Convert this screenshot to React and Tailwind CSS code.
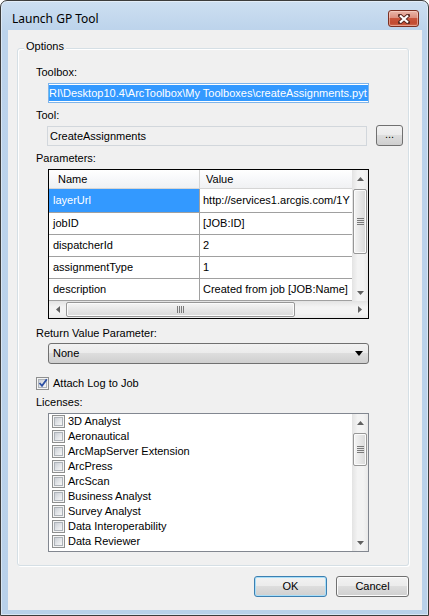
import React from "react";

function Arrow({ dir, color = "#4d4d4d" }) {
  if (dir === "up")
    return (
      <svg width="7" height="4" viewBox="0 0 7 4"><polygon points="0,4 3.5,0 7,4" fill={color} /></svg>
    );
  if (dir === "down")
    return (
      <svg width="7" height="4" viewBox="0 0 7 4"><polygon points="0,0 7,0 3.5,4" fill={color} /></svg>
    );
  if (dir === "left")
    return (
      <svg width="4" height="7" viewBox="0 0 4 7"><polygon points="4,0 4,7 0,3.5" fill={color} /></svg>
    );
  return (
    <svg width="4" height="7" viewBox="0 0 4 7"><polygon points="0,0 0,7 4,3.5" fill={color} /></svg>
  );
}

function VScroll({ thumbClass }) {
  return (
    <div className="w-[16px] h-full flex flex-col bg-[linear-gradient(to_right,#e3e3e3,#f3f3f3_35%,#f3f3f3_70%,#e9e9e9)]">
      <div className="h-[17px] shrink-0 flex items-center justify-center">
        <Arrow dir="up" color="#606060" />
      </div>
      <div
        className={`mx-[1px] shrink-0 rounded-[2px] border border-[#979797] bg-[linear-gradient(to_right,#f5f5f5,#e7e7e7_50%,#d9d9d9)] shadow-[inset_0_0_0_1px_#fbfbfb] flex flex-col items-center justify-center gap-[1px] ${thumbClass}`}
      >
        <div className="w-[7px] h-[1px] bg-[#7a7a7a]" />
        <div className="w-[7px] h-[1px] bg-[#7a7a7a]" />
        <div className="w-[7px] h-[1px] bg-[#7a7a7a]" />
        <div className="w-[7px] h-[1px] bg-[#7a7a7a]" />
      </div>
      <div className="flex-1" />
      <div className="h-[17px] shrink-0 flex items-center justify-center">
        <Arrow dir="down" color="#606060" />
      </div>
    </div>
  );
}

function HScroll() {
  return (
    <div className="h-[17px] w-full flex bg-[linear-gradient(to_bottom,#e3e3e3,#f3f3f3_35%,#f3f3f3_70%,#e9e9e9)]">
      <div className="w-[17px] shrink-0 flex items-center justify-center">
        <Arrow dir="left" color="#606060" />
      </div>
      <div className="w-[229px] my-[1px] shrink-0 rounded-[2px] border border-[#979797] bg-[linear-gradient(to_bottom,#f5f5f5,#e7e7e7_50%,#d9d9d9)] shadow-[inset_0_0_0_1px_#fbfbfb] flex items-center justify-center gap-[1px]">
        <div className="w-[1px] h-[7px] bg-[#7a7a7a]" />
        <div className="w-[1px] h-[7px] bg-[#7a7a7a]" />
        <div className="w-[1px] h-[7px] bg-[#7a7a7a]" />
        <div className="w-[1px] h-[7px] bg-[#7a7a7a]" />
      </div>
      <div className="flex-1" />
      <div className="w-[17px] shrink-0 flex items-center justify-center">
        <Arrow dir="right" color="#606060" />
      </div>
    </div>
  );
}

function CheckBox({ checked }) {
  return (
    <div className="w-[13px] h-[13px] shrink-0 border border-[#8e8f8f] bg-[#f4f4f4] p-[1px]">
      <div className="relative w-full h-full border border-[#aeb3b9] bg-[linear-gradient(135deg,#cbcfd5,#e6e8eb_60%,#f6f6f6)]">
        {checked && (
          <svg className="absolute -left-[1px] -top-[2px]" width="10" height="10" viewBox="0 0 10 10">
            <path d="M1.5 5 L4 7.8 L8.8 1.2" fill="none" stroke="#2c4fa3" strokeWidth="1.8" />
          </svg>
        )}
      </div>
    </div>
  );
}

const btn =
  "h-[21px] rounded-[3px] border bg-[linear-gradient(to_bottom,#f2f2f2,#ebebeb_50%,#dddddd_50%,#cfcfcf)] flex items-center";

const rows = [
  ["layerUrl", "http://services1.arcgis.com/1Y"],
  ["jobID", "[JOB:ID]"],
  ["dispatcherId", "2"],
  ["assignmentType", "1"],
  ["description", "Created from job [JOB:Name]"],
];

const licenses = [
  "3D Analyst",
  "Aeronautical",
  "ArcMapServer Extension",
  "ArcPress",
  "ArcScan",
  "Business Analyst",
  "Survey Analyst",
  "Data Interoperability",
  "Data Reviewer",
];

export default function App() {
  return (
    <div className="w-[429px] h-[616px] flex flex-col pl-[7px] pr-[6px] pb-[5px] border border-[#3c3c3c] rounded-t-[7px] bg-[linear-gradient(to_bottom,#cddff1,#bcd3eb_30px,#b9d1ea)] shadow-[inset_0_0_0_1px_rgba(255,255,255,0.45)] text-[11px] leading-[13px] text-black font-['Liberation_Sans',Arial,sans-serif]">
      {/* title bar */}
      <div className="h-[29px] shrink-0 flex items-start justify-between">
        <div className="pl-[4px] pt-[10px] text-[12px] leading-[16px] font-['Noto_Sans','Liberation_Sans',sans-serif]">
          Launch GP Tool
        </div>
        <div className="mt-[9px] mr-[3px] w-[31px] h-[17px] rounded-[3px] border border-[#7b3022] bg-[linear-gradient(to_bottom,#eab7aa,#dd8f7e_45%,#c9553c_50%,#c24a30_80%,#d06a4f)] shadow-[inset_0_0_0_1px_rgba(255,220,210,0.5)] flex items-center justify-center">
          <svg width="12" height="10" viewBox="0 0 12 10">
            <path d="M2 1.5 L10 8.5 M10 1.5 L2 8.5" stroke="#5a2a22" strokeWidth="4" strokeLinecap="square" />
            <path d="M2 1.5 L10 8.5 M10 1.5 L2 8.5" stroke="#ffffff" strokeWidth="2.2" />
          </svg>
        </div>
      </div>

      {/* client */}
      <div className="flex-1 bg-[#f0f0f0] flex flex-col">
        {/* group box */}
        <div className="relative mt-[18px] ml-[9px] w-[392px] h-[518px] shrink-0 border border-[#d5dfe5] rounded-[3px] shadow-[inset_1px_1px_0_#ffffff,1px_1px_0_#ffffff] pl-[18px] flex flex-col">
          <div className="absolute left-[6px] -top-[9px] px-[2px] bg-[#f0f0f0]">Options</div>

          <div className="mt-[17px] h-[13px]">Toolbox:</div>
          <div className="ml-[12px] mt-[4px] w-[321px] h-[20px] border border-[#7eb4ea] bg-white flex items-center overflow-hidden">
            <div className="w-full h-[16px] bg-[#3399ff] text-white whitespace-nowrap overflow-hidden flex items-center">
              RI\Desktop10.4\ArcToolbox\My Toolboxes\createAssignments.pyt
            </div>
          </div>

          <div className="mt-[6px] h-[13px]">Tool:</div>
          <div className="mt-[3px] h-[21px] flex items-start">
            <div className="ml-[11px] mt-[1px] w-[320px] h-[20px] border border-[#d2d7dc] bg-[#f0f0f0] pl-[2px] flex items-center">
              CreateAssignments
            </div>
            <div className={`${btn} justify-center ml-[9px] w-[27px] border-[#707070] pb-[3px]`}>...</div>
          </div>

          <div className="mt-[6px] h-[13px]">Parameters:</div>
          <div className="ml-[12px] mt-[4px] w-[321px] h-[150px] border border-black bg-white flex flex-col">
            <div className="h-[131px] flex">
              <div className="w-[303px] flex flex-col">
                <div className="h-[19px] flex border-b border-[#d5d5d5] bg-[linear-gradient(to_bottom,#ffffff,#f7f8fa_50%,#f0f1f3)]">
                  <div className="w-[151px] border-r border-[#d5d5d5] pl-[9px] flex items-center">Name</div>
                  <div className="flex-1 pl-[6px] flex items-center">Value</div>
                </div>
                {rows.map(([n, v], i) => (
                  <div
                    key={n}
                    className={`${i === 0 ? "h-[24px]" : "h-[22px]"} flex border-b border-[#a0a0a0]`}
                  >
                    <div
                      className={`w-[151px] border-r border-[#a0a0a0] pl-[4px] flex items-center ${
                        i === 0 ? "bg-[#3399ff] text-white" : ""
                      }`}
                    >
                      {n}
                    </div>
                    <div className="w-[152px] pl-[3px] flex items-center whitespace-nowrap overflow-hidden">{v}</div>
                  </div>
                ))}
              </div>
              <VScroll thumbClass="mt-[2px] h-[65px]" />
            </div>
            <HScroll />
          </div>

          <div className="mt-[8px] h-[13px]">Return Value Parameter:</div>
          <div className={`${btn} justify-between ml-[12px] mt-[3px] w-[321px] border-[#707070] pl-[4px] pr-[5px]`}>
            <span>None</span>
            <svg width="8" height="5" viewBox="0 0 8 5">
              <polygon points="0,0 8,0 4,5" fill="#000" />
            </svg>
          </div>

          <div className="mt-[13px] h-[13px] flex items-center gap-[4px]">
            <CheckBox checked />
            <span>Attach Log to Job</span>
          </div>

          <div className="mt-[6px] h-[13px]">Licenses:</div>
          <div className="ml-[12px] mt-[4px] w-[321px] h-[139px] border border-[#828790] bg-white flex">
            <div className="w-[303px] flex flex-col pl-[3px]">
              {licenses.map((l) => (
                <div key={l} className="h-[15px] flex items-center gap-[3px]">
                  <CheckBox />
                  <span>{l}</span>
                </div>
              ))}
            </div>
            <VScroll thumbClass="mt-[2px] h-[33px]" />
          </div>
        </div>

        {/* buttons */}
        <div className="mt-[10px] pr-[13px] flex justify-end gap-[9px]">
          <div className={`${btn} justify-center w-[73px] border-[#3c7fb1] shadow-[inset_0_0_0_1px_#a8def8]`}>OK</div>
          <div className={`${btn} justify-center w-[73px] border-[#707070] shadow-[inset_0_0_0_1px_#fbfbfb]`}>Cancel</div>
        </div>
      </div>
    </div>
  );
}
